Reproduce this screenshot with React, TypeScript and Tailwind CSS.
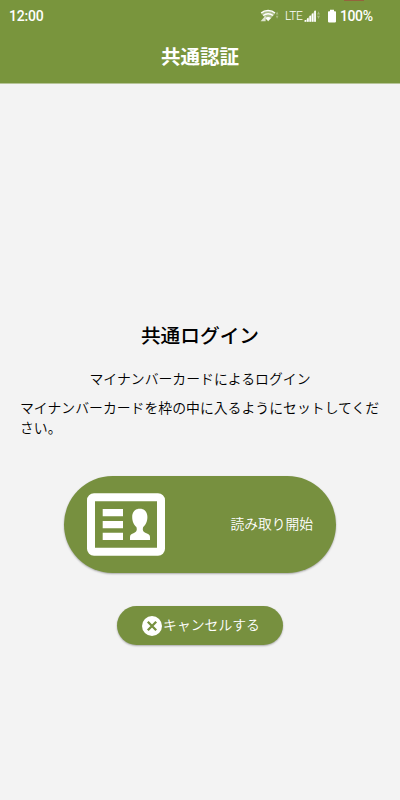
import React from 'react';

const WifiIcon: React.FC = () => (
  <svg className="h-3.5 w-5 shrink-0" viewBox="0 0 20 14" fill="none">
    <path d="M1 4.6 C4.8 .4 11.4 .4 15.2 4.6 L8.2 12.6Z" fill="#fff" fillOpacity=".4" />
    <path d="M1.2 4 C4.8 .7 11.4 .7 15 4" stroke="#fff" strokeWidth="1.6" />
    <path d="M3.2 6.6 C6 4.1 10.2 4.1 13 6.6" stroke="#fff" strokeWidth="1.4" />
    <path d="M5.4 9 C7 7.5 9.4 7.5 11 9 L8.2 12Z" fill="#fff" />
    <path d="M.6 12.3 L5.6 6.6 V12.3Z" fill="#fff" fillOpacity=".75" />
    <path d="M15.7 5.6 L17.1 2.5 L18.5 5.6Z M15.7 6.7 H18.5 L17.1 9.8Z" fill="#fff" fillOpacity=".35" />
  </svg>
);

const SignalIcon: React.FC = () => (
  <svg className="h-3.5 w-[17px] shrink-0" viewBox="0 0 17 14" fill="#fff">
    <path d="M0 12.8 L12 1 V12.8Z" fillOpacity=".35" />
    <path d="M.6 11 h1.7 v1.8 H.6Z M3 9.2 h1.7 v3.6 H3Z M5.4 6.8 h1.7 v6 H5.4Z M7.8 4.4 h1.7 v8.4 H7.8Z M10.2 1.8 h1.7 v11 h-1.7Z" />
    <path d="M13 5.5 L14.5 2.2 L16 5.5Z M13 6.7 H16 L14.5 10Z" fillOpacity=".35" />
  </svg>
);

const BatteryIcon: React.FC = () => (
  <svg className="h-3.5 w-2 shrink-0" viewBox="0 0 8 14" fill="#fff">
    <path d="M2 .8 h4 v1.4 H7.2 a.8 .8 0 0 1 .8 .8 V12.6 a.8 .8 0 0 1 -.8 .8 H.8 a.8 .8 0 0 1 -.8 -.8 V3 a.8 .8 0 0 1 .8 -.8 H2Z" />
  </svg>
);

const CardIcon: React.FC = () => (
  <svg className="h-[63px] w-[78px]" viewBox="0 0 78 63" fill="#fff">
    <path
      fillRule="evenodd"
      d="M7 .3 H71 a7 7 0 0 1 7 7 V55.7 a7 7 0 0 1 -7 7 H7 a7 7 0 0 1 -7 -7 V7.3 a7 7 0 0 1 7 -7Z M8 8.3 V54.7 H70 V8.3Z"
    />
    <path d="M15.7 16 H36 V23.2 H15.7Z M15.7 28 H36 V35.2 H15.7Z M15.7 39.7 H36 V46.9 H15.7Z" />
    <path d="M52.8 15.7 C48 15.7 45.2 19 45.2 24 C45.2 29 47 31.8 49.4 34 C50.4 37.4 49.4 38.8 47 40 C44.4 41 43 41.4 43 44 V47 H63 V44 C63 41.4 61.4 41 58.8 40 C56.2 38.8 55.2 37.4 56.2 34 C58.6 31.8 60.4 29 60.4 24 C60.4 19 57.6 15.7 52.8 15.7Z" />
  </svg>
);

const CancelIcon: React.FC = () => (
  <svg className="h-5 w-5 shrink-0" viewBox="0 0 20 20">
    <circle cx="10" cy="10" r="10" fill="#fff" />
    <path d="M5.8 5.8 L14.2 14.2 M14.2 5.8 L5.8 14.2" stroke="#77903f" strokeWidth="2.3" />
  </svg>
);

const StatusBar: React.FC = () => (
  <div className="flex h-8 items-center pl-[9px] font-['Roboto',sans-serif] text-[14px] font-medium tracking-[-0.2px]">
    <span>12:00</span>
    <div className="ml-auto flex w-[140px] items-center">
      <WifiIcon />
      <span className="ml-[5px] w-[19px] text-[12px] font-light tracking-[-0.4px]">LTE</span>
      <SignalIcon />
      <span className="ml-[7px] flex"><BatteryIcon /></span>
      <span className="ml-1 tracking-[-0.4px]">100%</span>
    </div>
  </div>
);

const App: React.FC = () => {
  return (
    <div className="flex h-screen flex-col overflow-hidden bg-[#f3f3f3] font-['Noto_Sans_CJK_JP',sans-serif] text-black" lang="ja">
      <header className="relative h-[83px] shrink-0 bg-[#79953d] text-white shadow-[0_1px_0_rgba(121,149,61,0.5)]">
        <div className="absolute top-0 left-[344px] h-px w-5 bg-[#94633d]" />
        <StatusBar />
        <h1 className="mt-2 text-center text-[19.5px] leading-8 font-bold">共通認証</h1>
      </header>

      <main className="flex flex-col items-center px-5 pt-[236px]">
        <h2 className="text-[19.7px] leading-8 font-medium">共通ログイン</h2>
        <p className="mt-[17px] text-[13.87px] leading-5 font-[350]">マイナンバーカードによるログイン</p>
        <p className="mt-[9px] -mr-[2px] w-[362px] text-[13.87px] leading-5 font-[350] break-all">
          マイナンバーカードを枠の中に入るようにセットしてください。
        </p>

        <button className="mt-[39px] flex h-[97px] w-[272px] items-center justify-between rounded-full bg-[#77903f] px-[23px] text-white shadow-[0_1px_2px_rgba(0,0,0,0.3)]">
          <CardIcon />
          <span className="mb-[3px] text-[13.75px] font-[350]">読み取り開始</span>
        </button>

        <button className="mt-[33px] flex h-[39px] w-[166px] items-center justify-center rounded-full bg-[#77903f] text-white shadow-[0_1px_2px_rgba(0,0,0,0.3)]">
          <span className="ml-[2px] flex"><CancelIcon /></span>
          <span className="mb-[2px] ml-px text-[13.85px] font-[350]">キャンセルする</span>
        </button>
      </main>
    </div>
  );
};

export default App;
